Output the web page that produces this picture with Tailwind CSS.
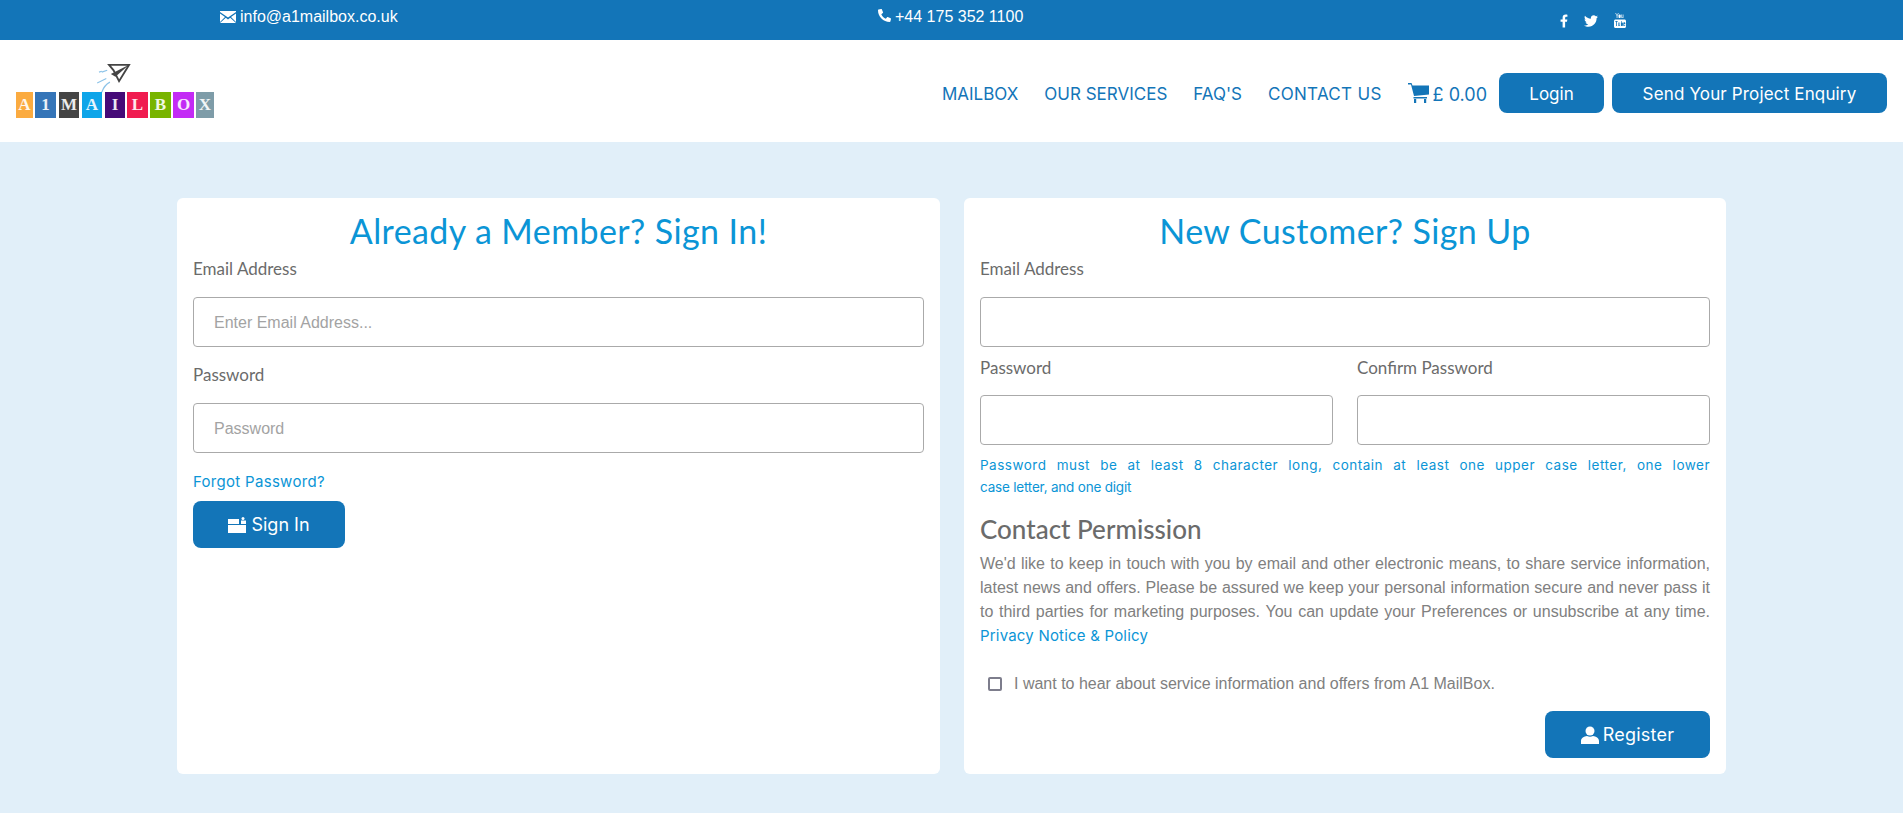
<!DOCTYPE html>
<html lang="en">
<head>
    <meta charset="UTF-8">
    <meta name="viewport" content="width=device-width, initial-scale=1.0">
    <title>A1 MailBox - Sign In</title>
    <script src="https://cdn.jsdelivr.net/npm/@tailwindcss/browser@4"></script>
</head>
<body class="bg-[#e1eff9] font-['Liberation_Sans',sans-serif] overflow-hidden">
    <!-- top bar -->
    <div class="h-10 bg-[#1375b8] flex text-white text-base">
        <div class="w-[878px] pl-[220px] pt-[5px] flex items-start gap-[2px]">
            <svg class="w-4 h-3 mt-[6px]" viewBox="0 0 16 12" fill="#fff"><path d="M0 1l8 5.500L16 1V0H0zM0 2.600V11l5-5zM16 2.600V11l-5-5zM5.800 6.700L0 12h16l-5.800-5.300L8 8.500z"/></svg>
            <span class="ml-[2px]">info@a1mailbox.co.uk</span>
        </div>
        <div class="w-[682px] pt-[5px] flex items-start gap-1">
            <svg class="w-[13px] h-[13px] mt-[4px]" viewBox="0 0 512 512" fill="#fff"><path transform="translate(512 0) scale(-1 1)" d="M493.400 24.600l-104-24c-11.300-2.600-22.900 3.300-27.500 13.900l-48 112c-4.200 9.800-1.400 21.300 6.900 28l60.600 49.600c-36 76.700-98.900 140.500-177.200 177.200l-49.600-60.600c-6.800-8.300-18.200-11.100-28-6.900l-112 48C3.900 366.500-2 378.100.6 389.400l24 104C27.100 504.200 36.700 512 48 512c256.100 0 464-207.500 464-464 0-11.200-7.700-20.900-18.600-23.400z"/></svg>
            <span>+44 175 352 1100</span>
        </div>
        <div class="flex items-center gap-4 pt-[1px]">
            <svg class="w-[8px] h-[14px]" viewBox="0 0 320 512" fill="#fff"><path d="M279.140 288l14.220-92.660h-88.910v-60.130c0-25.350 12.420-50.060 52.240-50.060h40.420V6.260S260.430 0 225.360 0c-73.220 0-121.080 44.380-121.080 124.720v70.620H22.890V288h81.390v224h100.170V288z"/></svg>
            <svg class="w-[14px] h-[14px]" viewBox="0 0 512 512" fill="#fff"><path d="M459.370 151.716c.325 4.548.325 9.097.325 13.645 0 138.720-105.583 298.558-298.558 298.558-59.452 0-114.680-17.219-161.137-47.106 8.447.974 16.568 1.299 25.340 1.299 49.055 0 94.213-16.568 130.274-44.832-46.132-.975-84.792-31.188-98.112-72.772 6.498.974 12.995 1.624 19.818 1.624 9.421 0 18.843-1.300 27.614-3.573-48.081-9.747-84.143-51.980-84.143-102.985v-1.299c13.969 7.797 30.214 12.670 47.431 13.319-28.264-18.843-46.781-51.005-46.781-87.391 0-19.492 5.197-37.360 14.294-52.954 51.655 63.675 129.300 105.258 216.365 109.807-1.624-7.797-2.599-15.918-2.599-24.040 0-57.828 46.782-104.934 104.934-104.934 30.213 0 57.502 12.670 76.670 33.137 23.715-4.548 46.456-13.320 66.599-25.340-7.798 24.366-24.366 44.833-46.132 57.827 21.117-2.273 41.584-8.122 60.426-16.243-14.292 20.791-32.161 39.308-52.628 54.253z"/></svg>
            <svg class="w-3 h-[15px]" viewBox="0 0 12 15" fill="#fff"><path d="M2 0l1 2.500L4 0h.7L3.400 3v2h-.7V3L1.300 0zM5.600 1.500c.7 0 1.100.4 1.100 1V4c0 .7-.4 1-1.100 1s-1.100-.4-1.100-1V2.500c0-.6.400-1 1.100-1zM7.400 1.500h.6V4.200c0 .2.400.2.700-.1V1.500h.7V5h-.7v-.4c-.6.600-1.300.600-1.300-.1z"/><path fill-rule="evenodd" d="M1.500 6.500h9c.8 0 1.500.7 1.500 1.500v5.500c0 .8-.7 1.500-1.500 1.500h-9C.7 15 0 14.300 0 13.500V8c0-.8.700-1.500 1.500-1.500zM1.300 8v.8h.8V13h.8V8.800h.8V8zM4.200 9.500V12.500c0 .6.700.6 1.300 0v.5h.6V9.500h-.6v2.600c-.3.300-.7.300-.7 0V9.500zM7 8v5h.6v-.3c.6.600 1.300.3 1.300-.5V10.300c0-.9-.7-1.100-1.300-.5V8zM9.300 10.300v1.900c0 1.200 2 1.200 2-.2h-.6c0 .6-.8.600-.8 0v-.7h1.400v-1c0-1.300-2-1.300-2 0z"/></svg>
        </div>
    </div>

    <!-- header -->
    <header class="h-[102px] bg-white flex items-center justify-between pl-4 pr-4">
        <div class="relative w-[200px] h-[102px]">
            <svg class="absolute left-[81px] top-[23px] w-[35px] h-[31px]" viewBox="0 0 38 34" fill="none">
                <path d="M13 2H35L24 20L18 8Z" stroke="#444" stroke-width="2" fill="#fff"/>
                <path d="M35 2L15 12L20 15Z" fill="#444"/>
                <path d="M2 10l3-1M5 10l6-2M0 22l10-5M5 32q3-8 9-11" stroke="#8cc3e8" stroke-width="1.300"/>
            </svg>
            <div class="absolute left-0 top-[52px] flex font-['Liberation_Serif',serif] font-bold text-white/90 text-[17px] leading-[26px] text-center">
                <span class="w-[17px] h-[26px] bg-[#fbab40]">A</span>
                <span class="w-[21px] h-[26px] bg-[#3575b8] ml-[2px]">1</span>
                <span class="w-[20px] h-[26px] bg-[#444444] ml-[3px]">M</span>
                <span class="w-[20px] h-[26px] bg-[#0ea5e9] ml-[3px]">A</span>
                <span class="w-[20px] h-[26px] bg-[#450a78] ml-[3px]">I</span>
                <span class="w-[21px] h-[26px] bg-[#f01c50] ml-[2px]">L</span>
                <span class="w-[21px] h-[26px] bg-[#78b400] ml-[2px]">B</span>
                <span class="w-[21px] h-[26px] bg-[#c32bf5] ml-[2px]">O</span>
                <span class="w-[18px] h-[26px] bg-[#7e9ca8] ml-[2px]">X</span>
            </div>
        </div>
        <nav class="flex items-center mt-1 text-[#1375b8] font-['Inter',sans-serif] text-[17px]">
            <a href="#" class="mr-[26px] pt-[3px]">MAILBOX</a>
            <a href="#" class="mr-[26px] pt-[3px]">OUR SERVICES</a>
            <a href="#" class="mr-[26px] pt-[3px]">FAQ'S</a>
            <a href="#" class="mr-[26px] pt-[3px] tracking-[0.3px]">CONTACT US</a>
            <svg class="w-[21px] h-[20px] mr-1" viewBox="0 0 21 20" fill="#1375b8"><path d="M0 0h3.500l1 2.500H21v9L6 13 3 1.500H0zM5.500 14H19v1.500H5.500zM6 16h2.200v4H6zM16 16h2.200v4H16z"/></svg>
            <span class="text-lg mr-3 pt-[3px]">£ 0.00</span>
            <a href="#" class="w-[105px] h-10 pt-[3px] bg-[#1375b8] rounded-lg text-white flex items-center justify-center mr-2">Login</a>
            <a href="#" class="w-[275px] h-10 pt-[3px] bg-[#1375b8] rounded-lg text-white flex items-center justify-center tracking-[0.15px]">Send Your Project Enquiry</a>
        </nav>
    </header>

    <!-- forms -->
    <main class="flex gap-6 pt-14 pl-[177px]">
        <section class="w-[763px] h-[576px] bg-white rounded-md px-4 text-[#6b6b6b]">
            <h2 class="text-[34px] leading-[38px] pt-[14px] tracking-[0.4px] text-center text-[#0b95d6] font-['Lato',sans-serif]">Already a Member? Sign In!</h2>
            <label class="block mt-[7px] text-[17px] leading-6 font-['Lato',sans-serif]">Email Address</label>
            <input type="text" placeholder="Enter Email Address..." class="block mt-4 w-full h-[50px] px-5 pt-[2px] border border-[#aaa] rounded text-base placeholder:text-[#a3a3a3]">
            <label class="block mt-4 text-[17px] leading-6 font-['Lato',sans-serif]">Password</label>
            <input type="password" placeholder="Password" class="block mt-4 w-full h-[50px] px-5 pt-[2px] border border-[#aaa] rounded text-base placeholder:text-[#a3a3a3]">
            <a href="#" class="block mt-[19px] text-[15px] leading-5 tracking-[0.3px] text-[#0b95d6] font-['Inter',sans-serif]">Forgot Password?</a>
            <button class="mt-[9px] w-[152px] h-[47px] bg-[#1375b8] rounded-lg text-white text-lg font-['Inter',sans-serif] flex items-center justify-center gap-[5px]">
                <svg class="w-[18px] h-4" viewBox="0 0 18 16" fill="#fff"><path d="M0 2h11v5H0zM13 3.500h5V7h-5zM0 8h18v8H0z"/><circle cx="15" cy="1.500" r="1.500"/></svg>
                Sign In
            </button>
        </section>

        <section class="w-[762px] h-[576px] bg-white rounded-md px-4 text-[#6b6b6b]">
            <h2 class="text-[34px] leading-[38px] pt-[14px] tracking-[0.4px] text-center text-[#0b95d6] font-['Lato',sans-serif]">New Customer? Sign Up</h2>
            <label class="block mt-[7px] text-[17px] leading-6 font-['Lato',sans-serif]">Email Address</label>
            <input type="text" class="block mt-4 w-full h-[50px] px-5 border border-[#aaa] rounded">
            <div class="grid grid-cols-2 gap-6 mt-[9px]">
                <div>
                    <label class="block text-[17px] leading-6 font-['Lato',sans-serif]">Password</label>
                    <input type="password" class="block mt-[15px] w-full h-[50px] border border-[#aaa] rounded">
                </div>
                <div>
                    <label class="block text-[17px] leading-6 font-['Lato',sans-serif]">Confirm Password</label>
                    <input type="password" class="block mt-[15px] w-full h-[50px] border border-[#aaa] rounded">
                </div>
            </div>
            <p class="mt-[9px] text-[13.500px] leading-[22px] text-[#0b95d6] font-['Inter',sans-serif]">
                <span class="block tracking-[0.5px] [text-align-last:justify]">Password must be at least 8 character long, contain at least one upper case letter, one lower</span>
                <span class="block tracking-[-0.2px]">case letter, and one digit</span>
            </p>
            <h3 class="mt-[15px] text-[26px] leading-8 font-medium font-['Lato',sans-serif]">Contact Permission</h3>
            <p class="mt-[7px] text-base leading-6 text-justify [text-align-last:justify] text-[#808080]">We'd like to keep in touch with you by email and other electronic means, to share service information, latest news and offers. Please be assured we keep your personal information secure and never pass it to third parties for marketing purposes. You can update your Preferences or unsubscribe at any time.</p>
            <a href="#" class="block text-[15px] leading-6 tracking-[0.2px] text-[#0b95d6] font-['Inter',sans-serif]">Privacy Notice &amp; Policy</a>
            <label class="flex items-center mt-6 ml-2 text-[#808080] text-base leading-6">
                <span class="w-[14px] h-[14px] border-2 border-[#7d7d8c] rounded-[2px] mr-[12px]"></span>
                I want to hear about service information and offers from A1 MailBox.
            </label>
            <div class="flex justify-end mt-[15px]">
                <button class="w-[165px] h-[47px] bg-[#1375b8] rounded-lg text-white text-lg tracking-[0.2px] font-['Inter',sans-serif] flex items-center justify-center gap-1">
                    <svg class="w-[18px] h-[18px]" viewBox="0 0 18 18" fill="#fff"><circle cx="9" cy="5" r="4.500"/><path d="M0 18v-3c0-3 3-4.500 6-5 2 1 4 1 6 0 3 .5 6 2 6 5v3z"/></svg>
                    Register
                </button>
            </div>
        </section>
    </main>
</body>
</html>
